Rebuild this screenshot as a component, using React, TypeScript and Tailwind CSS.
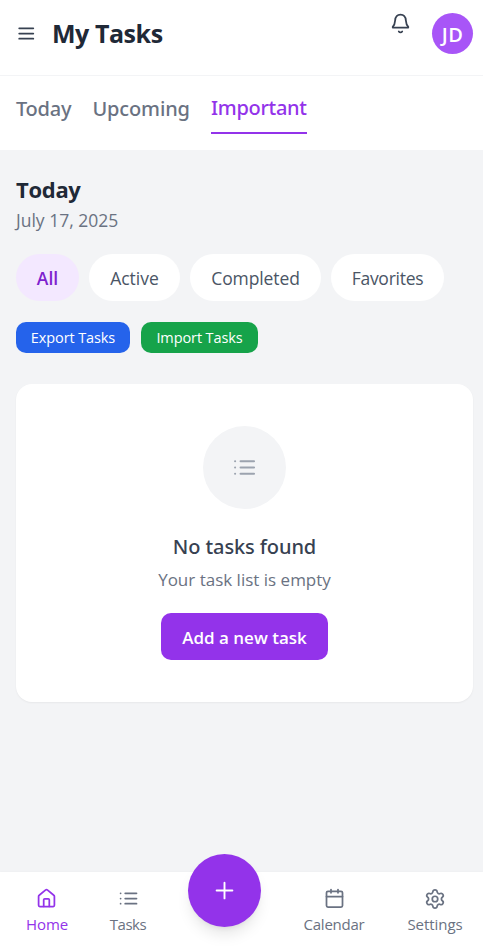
import React from "react";
import { Settings, Plus } from "lucide-react";

type IconProps = { className?: string; children?: React.ReactNode };

function Icon({ className = "", children }: IconProps) {
  return (
    <svg viewBox="0 0 21 21" fill="none" stroke="currentColor" strokeWidth="1.75" strokeLinecap="round" strokeLinejoin="round" className={`shrink-0 ${className}`}>
      {children}
    </svg>
  );
}

const ListIcon = ({ className }: IconProps) => (
  <Icon className={className}>
    <path d="M7.2 5.3h11.300M7.200 10.500h11.300M7.200 15.700h11.300" />
    <path d="M2.600 5.300h.01M2.600 10.500h.01M2.600 15.700h.01" />
  </Icon>
);

const tabs = [
  { label: "Today", cls: "w-[56px] tracking-[-0.25px]" },
  { label: "Upcoming", cls: "w-[98px] tracking-[-0.15px] -ml-[0.5px]" },
];

const filters = [
  { label: "All", cls: "w-[63px] bg-purple-100 text-[#7e22ce] font-semibold" },
  { label: "Active", cls: "w-[91px] bg-white text-gray-600" },
  { label: "Completed", cls: "w-[131px] bg-white text-gray-600 tracking-[-0.1px]" },
  { label: "Favorites", cls: "w-[113px] bg-white text-gray-600 tracking-[-0.25px]" },
];

export default function App() {
  return (
    <div className="flex h-[947px] w-[483px] flex-col overflow-hidden whitespace-nowrap bg-[#f3f4f6] font-['Open_Sans','Noto_Sans',sans-serif] text-[#1f2937]">
      <header className="flex h-[76px] shrink-0 items-start border-b border-gray-100 bg-white pl-4 pr-[10px] pt-[13px]">
        <Icon className="mt-[10px] h-[21px] w-[21px] text-[#374151]">
          <path d="M3.2 5.3h14.1M3.2 10.5h14.1M3.2 15.7h14.1" />
        </Icon>
        <h1 className="ml-[15px] mt-[2px] text-[25px] font-bold leading-9 tracking-[-0.45px]">My Tasks</h1>
        <Icon className="ml-auto h-[21px] w-[21px] text-[#374151]">
          <path d="M3.300 14.700c-.6 0-.8-.6-.4-1.100 1.500-1.600 2-3.200 2.200-6 .3-3.700 2.300-5.900 5.400-5.900s5.100 2.200 5.400 5.900c.2 2.800.7 4.400 2.200 6 .4.500.2 1.100-.4 1.100Z" />
          <path d="M8.800 18.400c.4.600.9.900 1.700.9s1.300-.3 1.700-.9" />
        </Icon>
        <div className="ml-[21px] flex h-[41px] w-[41px] items-center justify-center rounded-full bg-[#a855f7] pt-[2px] text-[20px] font-semibold tracking-[0.4px] text-white">JD</div>
      </header>

      <nav className="flex h-[74px] shrink-0 gap-[21px] bg-white pl-4 pt-[18px] font-['Noto_Sans','Open_Sans',sans-serif] text-[20px] font-medium leading-[30px] text-gray-500">
        {tabs.map((t) => (
          <span key={t.label} className={t.cls}>{t.label}</span>
        ))}
        <span className="-ml-[0.5px] -mt-px h-[41px] w-[96px] border-b-2 border-[#9333ea] tracking-[-0.3px] text-[#9333ea]">Important</span>
      </nav>

      <main className="flex grow flex-col pl-4 pr-[10px] pt-[24px]">
        <h2 className="text-[22px] font-bold leading-[30px] tracking-[-0.3px]">Today</h2>
        <p className="mt-[2px] text-[17.5px] leading-[28px] text-gray-500">July 17, 2025</p>
        <div className="mt-[20px] flex gap-[10px] text-[17.5px]">
          {filters.map((f) => (
            <button key={f.label} className={`flex h-[47px] shrink-0 items-center justify-center rounded-full pt-px ${f.cls}`}>{f.label}</button>
          ))}
        </div>
        <div className="mt-[21px] flex gap-[11px] text-[14.5px] tracking-[-0.1px] text-white">
          <button className="h-[31px] w-[114px] rounded-[10px] bg-[#2563eb]">Export Tasks</button>
          <button className="h-[31px] w-[117px] rounded-[10px] bg-[#16a34a]">Import Tasks</button>
        </div>
        <section className="mt-[31px] flex h-[318px] flex-col items-center rounded-[16px] bg-white pt-[42px] shadow-[0_1px_2px_rgba(0,0,0,0.05)]">
          <div className="flex h-[83px] w-[83px] items-center justify-center rounded-full bg-[#f3f4f6]">
            <ListIcon className="h-[25px] w-[25px] text-[#9ca3af]" />
          </div>
          <h3 className="mt-[22px] font-['Noto_Sans','Open_Sans',sans-serif] text-[20px] font-medium leading-[32px] tracking-[-0.1px] text-[#374151]">No tasks found</h3>
          <p className="mt-[2px] text-[17px] leading-[29px] text-gray-500">Your task list is empty</p>
          <button className="mt-[19px] h-[47px] w-[167px] rounded-[10px] bg-[#9333ea] pt-[2px] text-[17px] font-semibold text-white">Add a new task</button>
        </section>
      </main>

      <footer className="relative flex h-[75px] shrink-0 bg-white text-[15px] leading-[22px] tracking-[-0.25px] text-gray-500 shadow-[0_-1px_2px_rgba(0,0,0,0.02)]">
        <div className="ml-[16px] flex w-[62px] flex-col items-center pt-[16px] text-[#9333ea]">
          <Icon className="-ml-px h-[21px] w-[21px]">
            <path d="M2.600 8.400c0-.5.2-.9.6-1.200l6.200-5.100c.7-.5 1.500-.5 2.200 0l6.200 5.100c.4.300.6.700.6 1.200v8.900c0 .700-.5 1.200-1.200 1.200H3.800c-.7 0-1.200-.5-1.200-1.200Z" />
            <path d="M7.700 18.300v-6.500c0-.6.400-1 1-1h3.600c.6 0 1 .4 1 1v6.500" />
          </Icon>
          <span className="mt-[4px] tracking-[-0.1px]">Home</span>
        </div>
        <div className="ml-[20px] flex w-[60px] flex-col items-center pt-[16px]">
          <ListIcon className="h-[21px] w-[21px]" /><span className="mt-[4px] tracking-[-0.5px]">Tasks</span>
        </div>
        <div className="absolute left-[188px] top-[-18px] flex h-[73px] w-[73px] items-center justify-center rounded-full bg-[#9333ea] text-white shadow-lg">
          <Plus className="h-[27px] w-[27px]" strokeWidth={1.7} />
        </div>
        <div className="ml-[136px] flex w-[80px] flex-col items-center pt-[16px]">
          <Icon className="h-[21px] w-[21px]">
            <rect x="2.500" y="3.300" width="16" height="15.800" rx="1.500" />
            <path d="M2.500 8.500h16M7 1.600v3.200M14 1.600v3.200" />
          </Icon>
          <span className="mt-[4px]">Calendar</span>
        </div>
        <div className="ml-[21px] flex w-[80px] flex-col items-center pt-[16px]">
          <Settings className="-mb-[0.5px] -mt-[0.5px] h-[22px] w-[22px]" strokeWidth={1.9} /><span className="mt-[4px] tracking-[-0.05px]">Settings</span>
        </div>
      </footer>
    </div>
  );
}
